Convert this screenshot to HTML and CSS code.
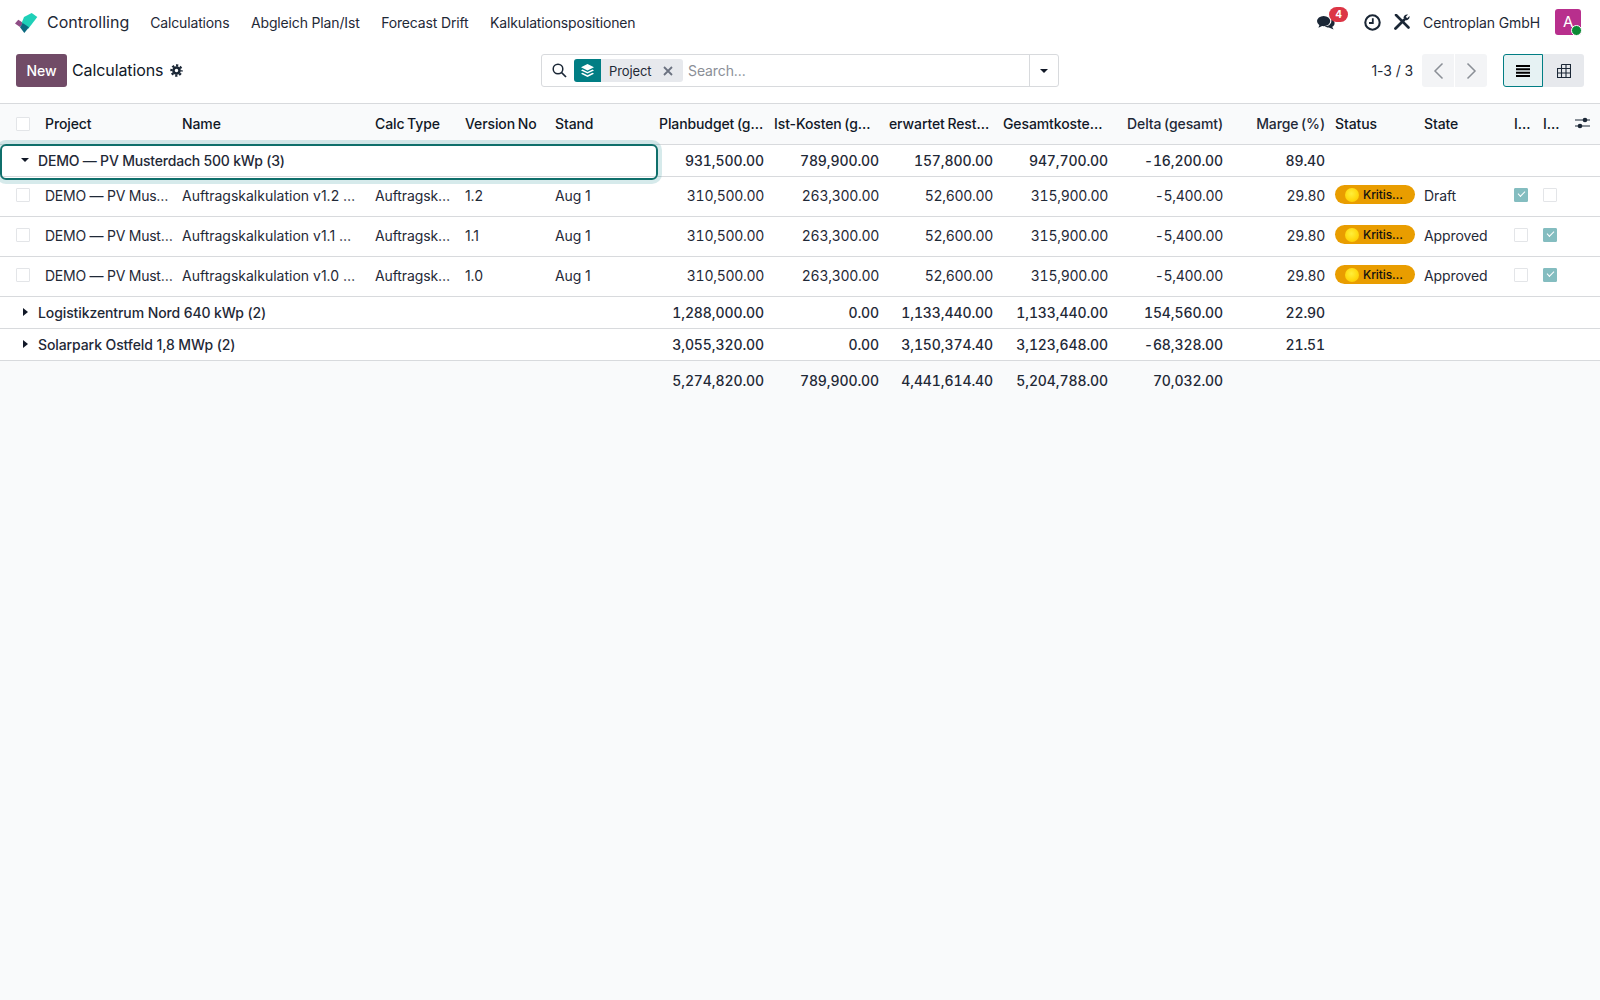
FILE: index.html
```html
<!DOCTYPE html>
<html lang="en">
<head>
<meta charset="utf-8">
<title>Calculations</title>
<link rel="stylesheet" href="styles.css">
</head>
<body>
<header class="nav">
  <svg class="logo" width="23" height="21" viewBox="0 0 23 21"><path d="M0 11.500 L3.300 7.700 L8.300 11 L5 15Z" fill="#8f4d85"/><path d="M9 5 L16.700 1 L22.300 5 L13.300 16.700 L6.700 11Z" fill="#1fd0b8"/><path d="M5 15.300 L7.700 11 L14 15.300 L9.300 21Z" fill="#0c6a80"/></svg>
  <span class="app">Controlling</span>
  <nav class="menu"><a>Calculations</a><a>Abgleich Plan/Ist</a><a>Forecast Drift</a><a>Kalkulationspositionen</a></nav>
  <div class="systray">
    <span class="chat">
      <svg width="19" height="17" viewBox="0 0 19 17"><ellipse cx="7" cy="7" rx="7" ry="5.4" fill="#1b2736"/><path d="M3 10 L1.5 14 L7 11.5Z" fill="#1b2736"/><path d="M15 5.2 C17.5 6 19 7.800 18.500 10 C18.200 11.500 17 12.500 16 13 L17.500 16 L12.500 13.800 C10.500 13.800 8.800 13.200 8 12.500 C12.500 12.800 16 10 15 5.200Z" fill="#1b2736"/></svg>
      <b class="badge">4</b>
    </span>
    <svg class="clock" width="17" height="17" viewBox="0 0 17 17"><circle cx="8.500" cy="8.500" r="7.200" fill="none" stroke="#1b2736" stroke-width="2.100"/><path d="M8.800 4.200 V9 H5" fill="none" stroke="#1b2736" stroke-width="1.800"/></svg>
    <svg class="tools" width="16" height="16" viewBox="0 0 16 16"><path d="M2 1 L14.500 13.500" stroke="#1b2736" stroke-width="2.600" stroke-linecap="round"/><path d="M1.500 14.500 L10 6" stroke="#1b2736" stroke-width="2.800" stroke-linecap="round"/><path d="M9.500 4 C9.500 1.800 11.500 0 14 .5 L11.800 2.800 L13.200 4.300 L15.500 2 C16 4.500 14 6.500 11.500 6.300Z" fill="#1b2736"/></svg>
    <span class="company">Centroplan GmbH</span>
    <span class="avatar">A<i class="presence"></i></span>
  </div>
</header>
<section class="panel">
  <div class="panel-left">
    <button class="new">New</button>
    <span class="title">Calculations</span>
    <svg width="13" height="13" viewBox="0 0 14 14"><circle cx="7" cy="7" r="3.300" fill="none" stroke="#1b2736" stroke-width="2.800"/><circle cx="7" cy="7" r="5.500" fill="none" stroke="#1b2736" stroke-width="2.400" stroke-dasharray="2.400 1.920" stroke-dashoffset="1.200"/></svg>
  </div>
  <div class="search">
    <svg class="lens" width="15" height="15" viewBox="0 0 15 15"><circle cx="6" cy="6" r="4.800" fill="none" stroke="#1b2736" stroke-width="1.500"/><path d="M9.500 9.500 L14 14" stroke="#1b2736" stroke-width="1.700"/></svg>
    <span class="facet">
      <span class="facet-icon"><svg width="13" height="13" viewBox="0 0 13 13"><path d="M6.500 0 L13 3.200 L6.500 6.400 L0 3.200Z" fill="#fff"/><path d="M1.500 5.400 L6.500 7.900 L11.500 5.400 L13 6.400 L6.500 9.600 L0 6.400Z" fill="#fff"/><path d="M1.500 8.700 L6.500 11.200 L11.500 8.700 L13 9.700 L6.500 13 L0 9.700Z" fill="#fff"/></svg></span>
      <span class="facet-label">Project</span>
      <svg class="facet-x" width="10" height="10" viewBox="0 0 10 10"><path d="M1 1 L9 9 M9 1 L1 9" stroke="#6b7280" stroke-width="1.800"/></svg>
    </span>
    <span class="placeholder">Search...</span>
    <span class="search-caret"><i class="caret-down"></i></span>
  </div>
  <div class="panel-right">
    <span class="pager">1-3 / 3</span>
    <span class="pager-btns">
      <span class="pg"><svg width="11" height="18" viewBox="0 0 11 18"><path d="M9.500 1.500 L2 9 L9.500 16.500" fill="none" stroke="#8a8f96" stroke-width="1.500"/></svg></span>
      <span class="pg"><svg width="11" height="18" viewBox="0 0 11 18"><path d="M1.500 1.500 L9 9 L1.500 16.500" fill="none" stroke="#8a8f96" stroke-width="1.500"/></svg></span>
    </span>
    <span class="views">
      <span class="view active"><svg width="14" height="12" viewBox="0 0 14 12"><path d="M0 1 H14 M0 4.300 H14 M0 7.700 H14 M0 11 H14" stroke="#000" stroke-width="1.900"/></svg></span>
      <span class="view"><svg width="14" height="14" viewBox="0 0 14 14"><path d="M4.500 .5 H13.500 V13.500 H.5 V4.500 H13.500 M.5 9 H13.500 M4.500 .5 V13.500 M9 .5 V13.500" fill="none" stroke="#1b2736" stroke-width="1.100"/></svg></span>
    </span>
  </div>
</section>
<table class="list">
  <colgroup>
    <col class="c40"><col class="c137"><col class="c193"><col class="c90"><col class="c90"><col class="c104"><col class="c115"><col class="c115"><col class="c114"><col class="c115"><col class="c115"><col class="c102"><col class="c89"><col class="c90"><col class="c29"><col class="c29"><col class="c33">
  </colgroup>
  <thead>
    <tr>
      <th class="sel"><i class="cb"></i></th>
      <th>Project</th><th>Name</th><th>Calc Type</th><th>Version No</th><th>Stand</th>
      <th>Planbudget (g…</th><th>Ist-Kosten (g…</th><th>erwartet Rest…</th><th>Gesamtkoste…</th><th class="num">Delta (gesamt)</th><th class="num">Marge (%)</th>
      <th>Status</th><th>State</th><th>I…</th><th>I…</th>
      <th class="opts"><svg width="15" height="12" viewBox="0 0 15 12"><path d="M0 3 H15 M0 9 H15" stroke="#1b2736" stroke-width="1.200"/><circle cx="10" cy="3" r="2.300" fill="#1b2736"/><circle cx="5" cy="9" r="2.300" fill="#1b2736"/></svg></th>
    </tr>
  </thead>
  <tbody>
    <tr class="group">
      <td colspan="6" class="group-name focused"><i class="caret-down small"></i>DEMO — PV Musterdach 500 kWp (3)</td>
      <td class="num">931,500.00</td><td class="num">789,900.00</td><td class="num">157,800.00</td><td class="num">947,700.00</td><td class="num">-16,200.00</td><td class="num">89.40</td>
      <td colspan="5"></td>
    </tr>
    <tr class="data">
      <td class="sel"><i class="cb"></i></td><td class="proj">DEMO — PV Mus…</td><td class="name">Auftragskalkulation v1.2 …</td><td>Auftragsk…</td><td>1.2</td><td>Aug 1</td>
      <td class="num">310,500.00</td><td class="num">263,300.00</td><td class="num">52,600.00</td><td class="num">315,900.00</td><td class="num">-5,400.00</td><td class="num">29.80</td>
      <td><span class="pill"><i class="dot"></i>Kritis…</span></td><td>Draft</td><td><i class="cb on"></i></td><td><i class="cb"></i></td><td></td>
    </tr>
    <tr class="data">
      <td class="sel"><i class="cb"></i></td><td class="proj">DEMO — PV Must…</td><td class="name">Auftragskalkulation v1.1 …</td><td>Auftragsk…</td><td>1.1</td><td>Aug 1</td>
      <td class="num">310,500.00</td><td class="num">263,300.00</td><td class="num">52,600.00</td><td class="num">315,900.00</td><td class="num">-5,400.00</td><td class="num">29.80</td>
      <td><span class="pill"><i class="dot"></i>Kritis…</span></td><td>Approved</td><td><i class="cb"></i></td><td><i class="cb on"></i></td><td></td>
    </tr>
    <tr class="data">
      <td class="sel"><i class="cb"></i></td><td class="proj">DEMO — PV Must…</td><td class="name">Auftragskalkulation v1.0 …</td><td>Auftragsk…</td><td>1.0</td><td>Aug 1</td>
      <td class="num">310,500.00</td><td class="num">263,300.00</td><td class="num">52,600.00</td><td class="num">315,900.00</td><td class="num">-5,400.00</td><td class="num">29.80</td>
      <td><span class="pill"><i class="dot"></i>Kritis…</span></td><td>Approved</td><td><i class="cb"></i></td><td><i class="cb on"></i></td><td></td>
    </tr>
    <tr class="group">
      <td colspan="6" class="group-name"><i class="caret-right"></i>Logistikzentrum Nord 640 kWp (2)</td>
      <td class="num">1,288,000.00</td><td class="num">0.00</td><td class="num">1,133,440.00</td><td class="num">1,133,440.00</td><td class="num">154,560.00</td><td class="num">22.90</td>
      <td colspan="5"></td>
    </tr>
    <tr class="group">
      <td colspan="6" class="group-name"><i class="caret-right"></i>Solarpark Ostfeld 1,8 MWp (2)</td>
      <td class="num">3,055,320.00</td><td class="num">0.00</td><td class="num">3,150,374.40</td><td class="num">3,123,648.00</td><td class="num">-68,328.00</td><td class="num">21.51</td>
      <td colspan="5"></td>
    </tr>
  </tbody>
  <tfoot>
    <tr>
      <td colspan="6"></td>
      <td class="num">5,274,820.00</td><td class="num">789,900.00</td><td class="num">4,441,614.40</td><td class="num">5,204,788.00</td><td class="num">70,032.00</td>
      <td colspan="6"></td>
    </tr>
  </tfoot>
</table>
</body>
</html>
```

FILE: styles.css
```css
* { box-sizing: border-box; }
html, body { height: 100%; }
body {
  margin: 0;
  background: #f9fafb;
  font-family: Inter, "Liberation Sans", sans-serif;
  font-size: 14px;
  letter-spacing: -0.1px;
  color: #1f2937;
}

/* top navigation */
.nav {
  height: 46px;
  background: #fff;
  display: flex;
  align-items: center;
  padding: 0 0 2px 15px;
}
.logo { flex: none; }
.app { margin-left: 9px; font-size: 16px; letter-spacing: 0; color: #1f2937; }
.menu { display: flex; gap: 21.5px; margin-left: 21px; letter-spacing: -0.15px; color: #1f2937; }
.systray { margin-left: auto; display: flex; align-items: center; padding-right: 19px; }
.chat { position: relative; display: flex; width: 18px; height: 17px; }
.badge {
  position: absolute;
  left: 12px;
  top: -7px;
  width: 19px;
  height: 15px;
  border-radius: 8px;
  background: #dc3545;
  color: #fff;
  font-size: 10px;
  font-weight: 700;
  line-height: 15px;
  text-align: center;
}
.clock { margin-left: 29px; }
.tools { margin-left: 13px; }
.company { margin-left: 13px; }
.avatar {
  position: relative;
  margin-left: 15px;
  width: 26px;
  height: 26px;
  border-radius: 3px;
  background: #b82f8d;
  color: #fff;
  font-size: 15px;
  line-height: 26px;
  text-align: center;
}
.presence {
  position: absolute;
  right: -1px;
  bottom: -1px;
  width: 11px;
  height: 11px;
  border-radius: 50%;
  background: #0a8a34;
  border: 1px solid #fff;
}

/* control panel */
.panel {
  height: 58px;
  background: #fff;
  border-bottom: 1px solid #d8dadd;
  padding: 8px 16px 0;
  display: grid;
  grid-template-columns: 525px 518px 1fr;
  align-items: start;
}
.panel-left { display: flex; align-items: center; height: 33px; }
.new {
  width: 51px;
  height: 33px;
  border: 0;
  border-radius: 3px;
  background: #714b67;
  color: #fff;
  font: 500 14px Inter, "Liberation Sans", sans-serif;
  padding: 0;
}
.title { margin: 0 7px 2px 5px; font-size: 16px; color: #111827; }
.search {
  height: 33px;
  display: flex;
  align-items: center;
  background: #fff;
  border: 1px solid #d8dadd;
  border-radius: 3px;
  padding-left: 10px;
}
.lens { flex: none; }
.facet {
  margin-left: 7px;
  height: 23px;
  width: 109px;
  display: flex;
  align-items: center;
  background: #e7e9ed;
  border-radius: 3px;
  font-size: 13px;
}
.facet-icon {
  width: 27px;
  height: 23px;
  display: flex;
  align-items: center;
  justify-content: center;
  background: #017e84;
  border-radius: 3px 0 0 3px;
}
.facet-label { margin-left: 8px; }
.facet-x { margin-left: 12px; }
.placeholder { margin-left: 5px; color: #8b8f97; }
.search-caret {
  margin-left: auto;
  width: 29px;
  height: 100%;
  border-left: 1px solid #d8dadd;
  display: flex;
  align-items: center;
  justify-content: center;
}
.caret-down {
  display: inline-block;
  border: 4.500px solid transparent;
  border-top: 4.500px solid #111827;
  border-bottom: 0;
  width: 0;
  height: 0;
}
.panel-right { display: flex; align-items: center; justify-content: flex-end; height: 33px; }
.pager { color: #1f2937; }
.pager-btns {
  margin-left: 9px;
  display: flex;
  width: 65px;
  height: 33px;
  background: #f3f4f6;
  border-radius: 3px;
}
.pg {
  flex: 1;
  display: flex;
  align-items: center;
  justify-content: center;
}
.pg + .pg { border-left: 1px solid #fff; }
.views { margin-left: 16px; display: flex; height: 33px; width: 81px; }
.view {
  flex: 1;
  display: flex;
  align-items: center;
  justify-content: center;
  background: #e7e9ed;
  border-radius: 0 3px 3px 0;
}
.view.active {
  flex: 0 0 40px;
  background: #e6f2f3;
  border: 1px solid #017e84;
  border-radius: 3px 0 0 3px;
}

/* list */
.list {
  width: 1600px;
  table-layout: fixed;
  border-collapse: separate;
  border-spacing: 0;
}
.c40 { width: 40px; } .c137 { width: 137px; } .c193 { width: 193px; }
.c90 { width: 90px; } .c104 { width: 104px; } .c115 { width: 115px; }
.c114 { width: 114px; } .c102 { width: 102px; } .c89 { width: 89px; }
.c29 { width: 29px; } .c33 { width: 33px; }
th, td {
  padding: 0 5px;
  white-space: nowrap;
  overflow: hidden;
  text-align: left;
  font-weight: 400;
}
th {
  height: 41px;
  padding-bottom: 2px;
  font-weight: 500;
  word-spacing: -1px;
  color: #111827;
  border-bottom: 1px solid #d8dadd;
}
tbody td { background: #fff; border-bottom: 1px solid #d8dadd; }
td.num { font-variant-numeric: tabular-nums; }
.group td { height: 32px; font-weight: 500; }
.data td { height: 40px; padding-bottom: 2px; }
.data td.num { letter-spacing: -0.3px; }
.data td.proj { letter-spacing: -0.25px; }
.data td.name { letter-spacing: 0; }
tfoot td { height: 38px; font-weight: 500; }
th.num, td.num { text-align: right; }
th.num, tfoot .num, .group .num { color: #1f2937; }
th.sel, td.sel { padding-left: 16px; }
th.sel .cb { top: 1px; }
th.opts { padding: 0 0 2px 8px; }
.opts svg { display: block; }
td.group-name { padding-left: 38px; position: relative; overflow: visible; }
td.focused { letter-spacing: -0.2px; }
.group .caret-down.small {
  position: absolute;
  left: 21px;
  top: 13px;
}
.caret-right {
  position: absolute;
  left: 23px;
  top: 11px;
  width: 0;
  height: 0;
  border: 4.500px solid transparent;
  border-left: 5px solid #111827;
  border-right: 0;
}
.focused::after {
  content: "";
  position: absolute;
  box-sizing: border-box;
  left: 0;
  top: -1px;
  width: 658px;
  height: 36px;
  border: 2px solid #0f6f6b;
  border-radius: 6px;
  box-shadow: 0 0 0 4px rgba(1, 126, 132, .16);
  pointer-events: none;
}
.cb {
  display: block;
  width: 14px;
  height: 14px;
  background: #fff;
  border: 1px solid #e3e5e8;
  border-radius: 1px;
  position: relative;
}
.data .cb { top: -1px; }
.cb.on { background: #84bdc0; border-color: #84bdc0; }
.cb.on::after {
  content: "";
  position: absolute;
  left: 2.500px;
  top: 2.500px;
  width: 6px;
  height: 3px;
  box-sizing: content-box;
  border-left: 1.800px solid #fff;
  border-bottom: 1.800px solid #fff;
  transform: rotate(-45deg);
}
.pill {
  display: flex;
  align-items: center;
  width: 80px;
  height: 19px;
  background: #e99d00;
  border-radius: 10px;
  padding-left: 10px;
  font-size: 12px;
  font-weight: 500;
  color: #111;
  position: relative;
  top: -1px;
}
.dot {
  width: 14px;
  height: 14px;
  border-radius: 50%;
  background: radial-gradient(circle at 45% 40%, #ffee3b 0, #ffd90f 55%, #f9bf00 100%);
  margin-right: 4px;
}
```
